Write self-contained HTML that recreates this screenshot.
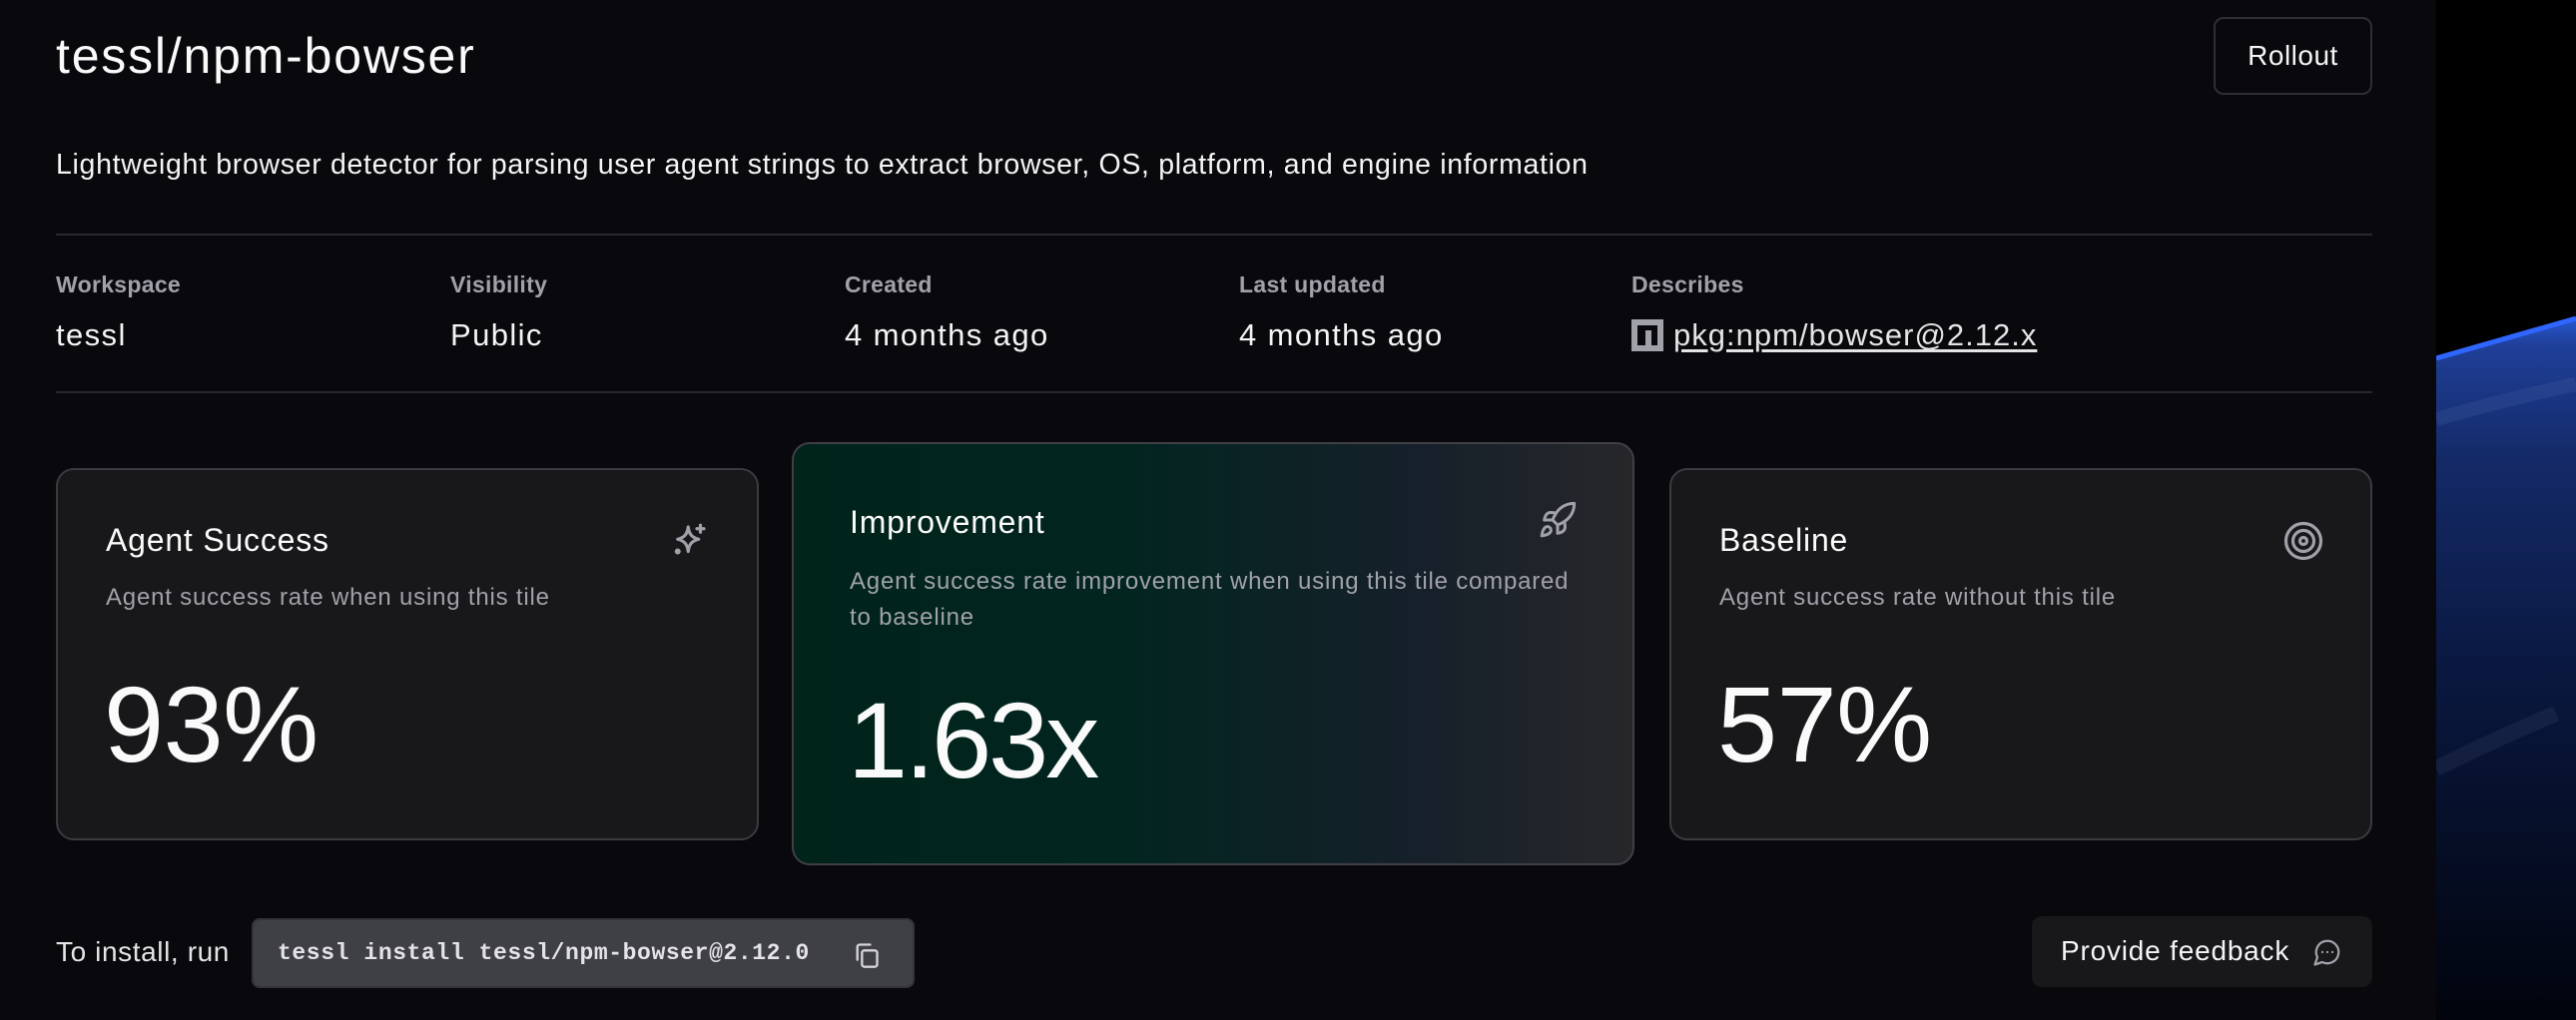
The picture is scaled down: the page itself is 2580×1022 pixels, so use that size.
<!DOCTYPE html>
<html><head><meta charset="utf-8"><style>
*{box-sizing:border-box;margin:0;padding:0}
body{width:2580px;height:1022px;background:#000;font-family:"Liberation Sans",sans-serif;color:#fafafa;position:relative;overflow:hidden}
.panel{position:absolute;left:0;top:0;width:2440px;height:1022px;background:#09090d}
.abs{position:absolute;white-space:nowrap}
.title{left:56px;top:26px;font-size:50px;line-height:60px;letter-spacing:1.8px}
.rollout{left:2217px;top:17px;width:159px;height:78px;border:2px solid #2e2e34;border-radius:10px;font-size:28px;display:flex;align-items:center;justify-content:center;color:#f4f4f5;letter-spacing:0.5px}
.desc{left:56px;top:148px;font-size:28.5px;line-height:34px;color:#f4f4f5;letter-spacing:0.68px}
.hr{position:absolute;left:56px;width:2320px;height:2px;background:#27272c}
.lbl{font-size:23px;color:#a1a1aa;font-weight:bold;top:272px;letter-spacing:0.3px}
.val{font-size:31px;top:318px;color:#f4f4f5;letter-spacing:1.4px}
.card{position:absolute;border:2px solid #3a3a40;border-radius:18px;background:#18181b}
.card h3{position:absolute;font-weight:normal;font-size:32px;color:#fafafa;white-space:nowrap;letter-spacing:0.8px}
.card p{position:absolute;font-size:24px;color:#a1a1aa;line-height:36px;letter-spacing:0.8px;white-space:nowrap}
.card .num{position:absolute;font-size:108px;line-height:110px;color:#fafafa;letter-spacing:-0.5px}
.card svg{position:absolute}
.code{left:252px;top:920px;width:664px;height:70px;background:#3f3f46;border:2px solid #333338;border-radius:8px}
.code span{position:absolute;left:24px;top:20px;font-family:"Liberation Mono",monospace;font-weight:bold;font-size:23px;color:#e4e4e7;letter-spacing:0.6px}
.fb{left:2035px;top:918px;width:341px;height:71px;background:#18181b;border-radius:10px}
</style></head><body>
<svg class="abs" style="left:2440px;top:0" width="140" height="1022" viewBox="0 0 140 1022">
<defs>
<linearGradient id="g" x1="0" y1="0" x2="0" y2="1"><stop offset="0" stop-color="#2858d0"/><stop offset="0.04" stop-color="#1f3f98"/><stop offset="0.2" stop-color="#142a68"/><stop offset="0.5" stop-color="#0a1840"/><stop offset="1" stop-color="#01040c"/></linearGradient>
</defs>
<rect width="140" height="1022" fill="#000"/>
<path d="M0 358 Q70 338 140 318 L140 1022 L0 1022 Z" fill="url(#g)"/>
<path d="M0 359 Q70 339 140 319" stroke="#2f66ff" stroke-width="5" fill="none"/>
<path d="M0 420 Q70 400 140 385" stroke="#5670b0" stroke-width="14" fill="none" opacity="0.2"/>
<path d="M0 770 Q60 740 120 715" stroke="#6a7aa0" stroke-width="16" fill="none" opacity="0.12"/>
</svg>
<div class="panel"></div>
<div class="abs title">tessl/npm-bowser</div>
<div class="abs rollout">Rollout</div>
<div class="abs desc">Lightweight browser detector for parsing user agent strings to extract browser, OS, platform, and engine information</div>
<div class="hr" style="top:234px"></div>
<div class="hr" style="top:392px"></div>
<div class="abs lbl" style="left:56px">Workspace</div>
<div class="abs lbl" style="left:451px">Visibility</div>
<div class="abs lbl" style="left:846px">Created</div>
<div class="abs lbl" style="left:1241px">Last updated</div>
<div class="abs lbl" style="left:1634px">Describes</div>
<div class="abs val" style="left:56px">tessl</div>
<div class="abs val" style="left:451px">Public</div>
<div class="abs val" style="left:846px">4 months ago</div>
<div class="abs val" style="left:1241px">4 months ago</div>
<div class="abs val" style="left:1634px;display:flex;align-items:center;letter-spacing:1px"><svg width="32" height="32" viewBox="0 0 32 32" style="margin-right:10px"><rect width="32" height="32" fill="#a1a1aa"/><rect x="6" y="6" width="20" height="20" fill="#09090d"/><rect x="14" y="11" width="6" height="15" fill="#a1a1aa"/></svg><span style="text-decoration:underline;text-underline-offset:4px;color:#e4e4e7">pkg:npm/bowser@2.12.x</span></div>

<div class="card" style="left:56px;top:469px;width:704px;height:373px">
<h3 style="left:48px;top:52px">Agent Success</h3>
<svg style="left:612px;top:50px" width="42" height="42" viewBox="0 0 24 24" fill="none" stroke="#a1a1aa" stroke-width="1.8" stroke-linecap="round" stroke-linejoin="round"><path d="M11 4 C11.5 8 13 10 17 11 C13 12 11.5 14 11 18 C10.5 14 9 12 5 11 C9 10 10.5 8 11 4Z"/><path d="M18 3v4M16 5h4"/><circle cx="5" cy="18" r="0.8" fill="#a1a1aa"/></svg>
<p style="left:48px;top:110px">Agent success rate when using this tile</p>
<div class="num" style="left:46px;top:200px">93%</div>
</div>

<div class="card" style="left:793px;top:443px;width:844px;height:424px;background:linear-gradient(90deg,#00231a 0%,#022520 40%,#16202a 75%,#27272a 100%);border-color:#3f3f46">
<h3 style="left:56px;top:60px">Improvement</h3>
<svg style="left:745px;top:56px" width="40" height="40" viewBox="0 0 24 24" fill="none" stroke="#a1a1aa" stroke-width="1.8" stroke-linecap="round" stroke-linejoin="round"><path d="M4.5 16.5c-1.5 1.26-2 5-2 5s3.74-.5 5-2c.71-.84.7-2.13-.09-2.91a2.18 2.18 0 0 0-2.91-.09z"/><path d="M12 15l-3-3a22 22 0 0 1 2-3.950A12.88 12.88 0 0 1 22 2c0 2.72-.78 7.5-6 11a22.35 22.35 0 0 1-4 2z"/><path d="M9 12H4s.55-3.03 2-4c1.62-1.08 5 0 5 0"/><path d="M12 15v5s3.03-.55 4-2c1.08-1.62 0-5 0-5"/></svg>
<p style="left:56px;top:120px">Agent success rate improvement when using this tile compared<br>to baseline</p>
<div class="num" style="left:54px;top:242px;letter-spacing:-3px">1.63x</div>
</div>

<div class="card" style="left:1672px;top:469px;width:704px;height:373px">
<h3 style="left:48px;top:52px">Baseline</h3>
<svg style="left:612px;top:50px" width="42" height="42" viewBox="0 0 24 24" fill="none" stroke="#a1a1aa" stroke-width="1.8"><circle cx="12" cy="12" r="10"/><circle cx="12" cy="12" r="6"/><circle cx="12" cy="12" r="2"/></svg>
<p style="left:48px;top:110px">Agent success rate without this tile</p>
<div class="num" style="left:46px;top:200px">57%</div>
</div>

<div class="abs" style="left:56px;top:938px;font-size:28px;color:#e4e4e7;letter-spacing:0.6px">To install, run</div>
<div class="abs code"><span>tessl install tessl/npm-bowser@2.12.0</span>
<svg style="position:absolute;left:600px;top:21px" width="28" height="28" viewBox="0 0 24 24" fill="none" stroke="#d4d4d8" stroke-width="2" stroke-linecap="round" stroke-linejoin="round"><rect x="8" y="8" width="13" height="14" rx="2"/><path d="M4 16V5a2 2 0 0 1 2-2h9"/></svg></div>
<div class="abs fb"><span style="position:absolute;left:29px;top:19px;font-size:28px;color:#f4f4f5;letter-spacing:0.8px">Provide feedback</span>
<svg style="position:absolute;left:281px;top:21px" width="30" height="30" viewBox="0 0 24 24" fill="none" stroke="#a1a1aa" stroke-width="1.8" stroke-linecap="round" stroke-linejoin="round"><path d="M7.9 20A9 9 0 1 0 4 16.1L2 22z"/><path d="M8 12h.01M12 12h.01M16 12h.01"/></svg></div>
</body></html>
